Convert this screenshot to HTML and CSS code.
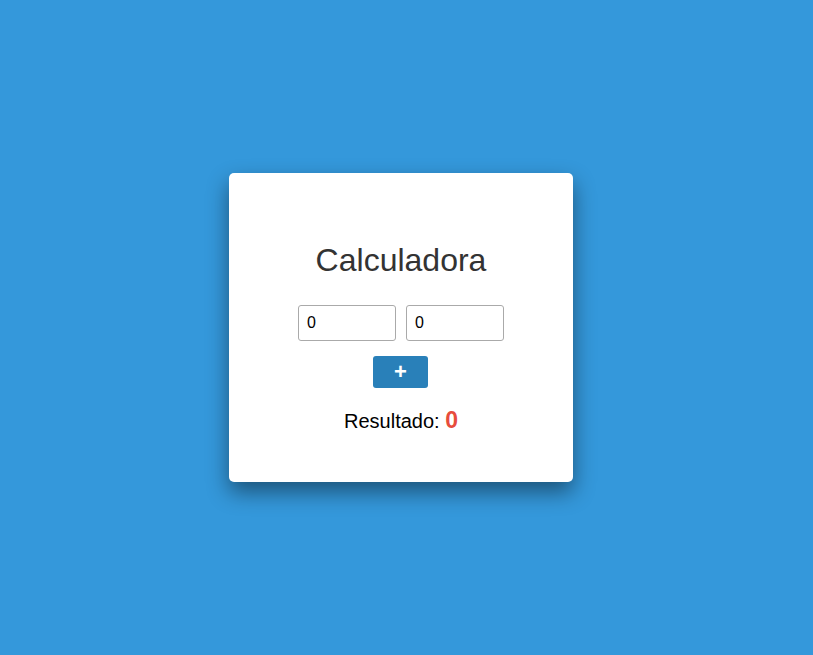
FILE: index.html
```html
<!DOCTYPE html>
<html lang="es">
<head>
<meta charset="utf-8">
<title>Calculadora</title>
<link rel="stylesheet" href="styles.css">
</head>
<body>
<div class="page">
  <div class="card">
    <h1 class="title">Calculadora</h1>
    <div class="inputs">
      <input class="num" type="number" value="0">
      <input class="num" type="number" value="0">
    </div>
    <button class="btn" type="button">+</button>
    <p class="result">Resultado: <span class="value">0</span></p>
  </div>
</div>
</body>
</html>
```
FILE: styles.css
```css
html, body {
  margin: 0;
  padding: 0;
  height: 100%;
}
body {
  background: #3498db;
  font-family: "Liberation Sans", Arial, sans-serif;
}
.page {
  height: 100%;
  display: flex;
  align-items: center;
  justify-content: center;
  padding-right: 11px;
  box-sizing: border-box;
}
.card {
  width: 344px;
  height: 309px;
  box-sizing: border-box;
  background: #fff;
  border-radius: 5px;
  box-shadow: 0 10px 22px rgba(0, 0, 0, 0.45);
  display: flex;
  flex-direction: column;
  align-items: center;
  padding-top: 69px;
}
.title {
  margin: 0;
  font-size: 32px;
  font-weight: normal;
  color: #333;
  line-height: 37px;
}
.inputs {
  display: flex;
  gap: 10px;
  margin-top: 26px;
}
.num {
  width: 98px;
  height: 36px;
  box-sizing: border-box;
  border: 1px solid #aaa;
  border-radius: 3px;
  padding: 0 8px;
  font-family: "Liberation Sans", Arial, sans-serif;
  font-size: 16px;
  color: #000;
  -moz-appearance: textfield;
}
.num::-webkit-outer-spin-button,
.num::-webkit-inner-spin-button {
  -webkit-appearance: none;
  margin: 0;
}
.btn {
  margin-top: 15px;
  margin-right: 1px;
  width: 55px;
  height: 32px;
  border: none;
  border-radius: 3px;
  background: #2980b9;
  color: #fff;
  font-family: "Liberation Sans", Arial, sans-serif;
  font-size: 22px;
  font-weight: bold;
  line-height: 1;
  padding: 0;
}
.result {
  margin: 21px 0 0;
  font-size: 20px;
  color: #000;
  line-height: 23px;
}
.value {
  color: #e74c3c;
  font-weight: bold;
  font-size: 23px;
}
```
